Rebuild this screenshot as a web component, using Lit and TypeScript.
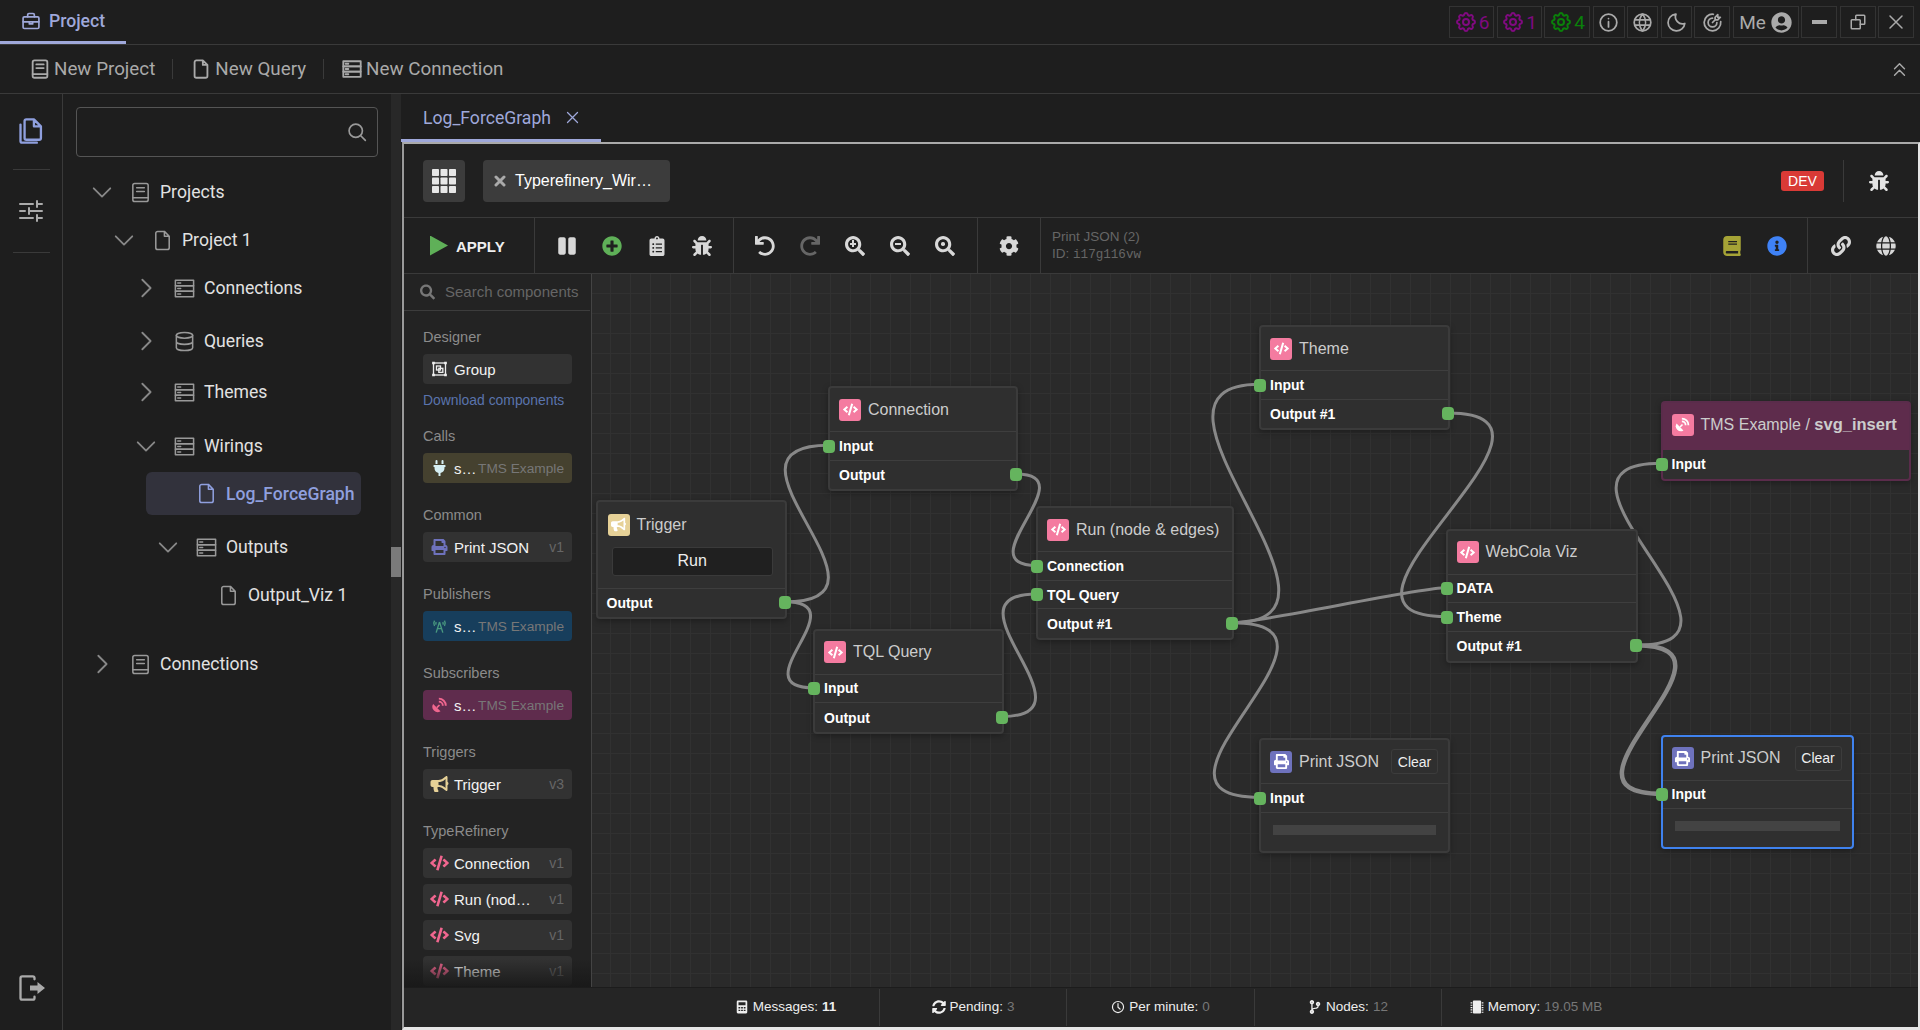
import { LitElement, html, css, svg } from "lit"
import { customElement } from "lit/decorators.js"

// font awesome style solid glyphs
const FA: Record<string, [string, string]> = {
  code: ["0 0 640 512", "M278.9 511.5l-61-17.7c-6.4-1.8-10-8.5-8.2-14.9L346.2 8.7c1.8-6.4 8.5-10.1 14.9-8.2l61 17.7c6.4 1.8 10 8.5 8.2 14.9L293.8 503.3c-1.9 6.4-8.5 10.1-14.9 8.2zm-114-112.2l43.5-46.4c4.6-4.9 4.3-12.7-.8-17.2L117 256l90.6-79.7c5.1-4.5 5.5-12.3.8-17.2l-43.5-46.4c-4.5-4.8-12.1-5.1-17-.5L3.8 247.2c-5.1 4.7-5.1 12.8 0 17.5l144.1 135.1c4.9 4.6 12.5 4.4 17-.5zm327.2.6l144.1-135.1c5.1-4.7 5.1-12.8 0-17.5L492.1 112.1c-4.8-4.5-12.4-4.3-17 .5L431.6 159c-4.6 4.9-4.3 12.7.8 17.2L523 256l-90.6 79.7c-5.1 4.5-5.5 12.3-.8 17.2l43.5 46.4c4.5 4.9 12.1 5.1 17 .6z"],
  print: ["0 0 512 512", "M448 192V77.25c0-8.49-3.37-16.62-9.37-22.63L393.37 9.37c-6-6-14.14-9.37-22.63-9.37H96C78.33 0 64 14.33 64 32v160c-35.35 0-64 28.65-64 64v112c0 8.84 7.16 16 16 16h48v96c0 17.67 14.33 32 32 32h320c17.67 0 32-14.33 32-32v-96h48c8.84 0 16-7.16 16-16V256c0-35.35-28.65-64-64-64zm-64 256H128v-96h256v96zm0-224H128V64h192v48c0 8.84 7.16 16 16 16h48v96zm48 72c-13.25 0-24-10.75-24-24 0-13.26 10.75-24 24-24s24 10.74 24 24c0 13.25-10.75 24-24 24z"],
  bug: ["0 0 512 512", "M511.988 288.9c-.478 17.43-15.217 31.1-32.653 31.1H424v16c0 21.864-4.882 42.584-13.6 61.145l60.228 60.228c12.496 12.497 12.496 32.758 0 45.255-12.498 12.497-32.759 12.496-45.256 0l-54.736-54.736C345.886 467.965 314.351 480 280 480V236c0-6.627-5.373-12-12-12h-24c-6.627 0-12 5.373-12 12v244c-34.351 0-65.886-12.035-90.636-32.108l-54.736 54.736c-12.498 12.497-32.759 12.496-45.256 0-12.496-12.497-12.496-32.758 0-45.255l60.228-60.228C92.882 378.584 88 357.864 88 336v-16H32.666C15.23 320 .491 306.33.013 288.9-.484 270.816 14.028 256 32 256h56v-58.745l-46.628-46.628c-12.496-12.497-12.496-32.758 0-45.255 12.498-12.497 32.758-12.497 45.256 0L141.255 160h229.489l54.627-54.627c12.498-12.497 32.758-12.497 45.256 0 12.496 12.497 12.496 32.758 0 45.255L424 197.255V256h56c17.972 0 32.484 14.816 31.988 32.9zM257 0c-61.856 0-112 50.144-112 112h224C369 50.144 318.856 0 257 0z"],
  bullhorn: ["0 0 576 512", "M576 240c0-23.63-12.95-44.04-32-55.12V32.01C544 23.26 537.02 0 512 0c-7.12 0-14.19 2.38-19.98 7.02l-85.03 68.03C364.28 109.19 310.66 128 256 128H64c-35.35 0-64 28.65-64 64v96c0 35.35 28.65 64 64 64h33.7c-1.39 10.48-2.18 21.14-2.18 32 0 39.77 9.26 77.35 25.56 110.94 5.19 10.69 16.52 17.06 28.4 17.06h74.28c26.05 0 41.69-29.84 25.9-50.56-16.4-21.52-26.15-48.36-26.15-77.44 0-11.11 1.62-21.79 4.41-32H256c54.66 0 108.28 18.81 150.98 52.95l85.03 68.03a32.023 32.023 0 0 0 19.98 7.02c24.92 0 32-22.78 32-32V295.13C563.05 284.04 576 263.63 576 240zm-96 141.42l-33.05-26.44C392.95 311.78 325.12 288 256 288v-96c69.12 0 136.95-23.78 190.95-66.98L480 98.58v282.84z"],
  plug: ["0 0 384 512", "M320,32a32,32,0,0,0-64,0v96h64Zm48,128H16A16,16,0,0,0,0,176v32a16,16,0,0,0,16,16H32v32A160.07,160.07,0,0,0,160,412.8V512h64V412.8A160.07,160.07,0,0,0,352,256V224h16a16,16,0,0,0,16-16V176A16,16,0,0,0,368,160ZM128,32a32,32,0,0,0-64,0v96h64Z"],
  info: ["0 0 512 512", "M256 8C119.043 8 8 119.083 8 256c0 136.997 111.043 248 248 248s248-111.003 248-248C504 119.083 392.957 8 256 8zm0 110c23.196 0 42 18.804 42 42s-18.804 42-42 42-42-18.804-42-42 18.804-42 42-42zm56 254c0 6.627-5.373 12-12 12h-88c-6.627 0-12-5.373-12-12v-24c0-6.627 5.373-12 12-12h12v-64h-12c-6.627 0-12-5.373-12-12v-24c0-6.627 5.373-12 12-12h64c6.627 0 12 5.373 12 12v100h12c6.627 0 12 5.373 12 12v24z"],
  plus: ["0 0 512 512", "M256 8C119 8 8 119 8 256s111 248 248 248 248-111 248-248S393 8 256 8zm144 276c0 6.6-5.4 12-12 12h-92v92c0 6.6-5.4 12-12 12h-56c-6.6 0-12-5.4-12-12v-92h-92c-6.6 0-12-5.4-12-12v-56c0-6.6 5.4-12 12-12h92v-92c0-6.6 5.4-12 12-12h56c6.6 0 12 5.4 12 12v92h92c6.6 0 12 5.4 12 12v56z"],
  pause: ["0 0 448 512", "M144 479H48c-26.5 0-48-21.5-48-48V79c0-26.5 21.5-48 48-48h96c26.5 0 48 21.5 48 48v352c0 26.5-21.5 48-48 48zm304-48V79c0-26.5-21.5-48-48-48h-96c-26.5 0-48 21.5-48 48v352c0 26.5 21.5 48 48 48h96c26.5 0 48-21.5 48-48z"],
  cog: ["0 0 512 512", "M487.4 315.7l-42.6-24.6c4.3-23.2 4.3-47 0-70.2l42.6-24.6c4.9-2.8 7.1-8.6 5.5-14-11.1-35.6-30-67.8-54.7-94.6-3.8-4.1-10-5.1-14.8-2.3L380.8 110c-17.9-15.4-38.5-27.3-60.8-35.1V25.8c0-5.6-3.9-10.5-9.4-11.7-36.7-8.2-74.3-7.8-109.2 0-5.5 1.2-9.4 6.1-9.4 11.7V75c-22.2 7.9-42.8 19.8-60.8 35.1L88.7 85.5c-4.9-2.8-11-1.9-14.8 2.3-24.7 26.7-43.6 58.9-54.7 94.6-1.7 5.4.6 11.2 5.5 14L67.3 221c-4.3 23.2-4.3 47 0 70.2l-42.6 24.6c-4.9 2.8-7.1 8.6-5.5 14 11.1 35.6 30 67.8 54.7 94.6 3.8 4.1 10 5.1 14.8 2.3l42.6-24.6c17.9 15.4 38.5 27.3 60.8 35.1v49.2c0 5.6 3.9 10.5 9.4 11.7 36.7 8.2 74.3 7.8 109.2 0 5.5-1.2 9.4-6.1 9.4-11.7v-49.2c22.2-7.9 42.8-19.8 60.8-35.1l42.6 24.6c4.9 2.8 11 1.9 14.8-2.3 24.7-26.7 43.6-58.9 54.7-94.6 1.5-5.5-.7-11.3-5.6-14.1zM256 336c-44.1 0-80-35.9-80-80s35.9-80 80-80 80 35.9 80 80-35.9 80-80 80z"],
  search: ["0 0 512 512", "M505 442.7L405.3 343c-4.5-4.5-10.6-7-17-7H372c27.6-35.3 44-79.7 44-128C416 93.1 322.9 0 208 0S0 93.1 0 208s93.1 208 208 208c48.3 0 92.7-16.4 128-44v16.3c0 6.4 2.5 12.5 7 17l99.7 99.7c9.4 9.4 24.6 9.4 33.9 0l28.3-28.3c9.4-9.4 9.4-24.6.1-34zM208 336c-70.7 0-128-57.2-128-128 0-70.7 57.2-128 128-128 70.7 0 128 57.2 128 128 0 70.7-57.2 128-128 128z"],
  undo: ["0 0 512 512", "M212.333 224.333H12c-6.627 0-12-5.373-12-12V12C0 5.373 5.373 0 12 0h48c6.627 0 12 5.373 12 12v78.112C117.773 39.279 184.26 7.47 258.175 8.007c136.906.994 246.448 111.623 246.157 248.532C504.041 393.258 393.12 504 256.333 504c-64.089 0-122.496-24.313-166.51-64.215-5.099-4.622-5.334-12.554-.467-17.42l33.967-33.967c4.474-4.474 11.662-4.717 16.401-.525C170.76 415.336 211.58 432 256.333 432c97.268 0 176-78.716 176-176 0-97.267-78.716-176-176-176-58.496 0-110.28 28.476-142.274 72.333h98.274c6.627 0 12 5.373 12 12v48c0 6.627-5.373 12-12 12z"],
  link: ["0 0 512 512", "M326.612 185.391c59.747 59.809 58.927 155.698.36 214.59-.11.12-.24.25-.36.37l-67.2 67.2c-59.27 59.27-155.699 59.262-214.96 0-59.27-59.26-59.27-155.7 0-214.96l37.106-37.106c9.84-9.84 26.786-3.3 27.294 10.606.648 17.722 3.826 35.527 9.69 52.721 1.986 5.822.567 12.262-3.783 16.612l-13.087 13.087c-28.026 28.026-28.905 73.66-1.155 101.96 28.024 28.579 74.086 28.749 102.325.51l67.2-67.19c28.191-28.191 28.073-73.757 0-101.83-3.701-3.694-7.429-6.564-10.341-8.569a16.037 16.037 0 0 1-6.947-12.606c-.396-10.567 3.348-21.456 11.698-29.806l21.054-21.055c5.521-5.521 14.182-6.199 20.584-1.731a152.482 152.482 0 0 1 20.522 17.197zM467.547 44.449c-59.261-59.262-155.69-59.27-214.96 0l-67.2 67.2c-.12.12-.25.25-.36.37-58.566 58.892-59.387 154.781.36 214.59a152.454 152.454 0 0 0 20.521 17.196c6.402 4.468 15.064 3.789 20.584-1.731l21.054-21.055c8.35-8.35 12.094-19.239 11.698-29.806a16.037 16.037 0 0 0-6.947-12.606c-2.912-2.005-6.64-4.875-10.341-8.569-28.073-28.073-28.191-73.639 0-101.83l67.2-67.19c28.239-28.239 74.3-28.069 102.325.51 27.75 28.3 26.872 73.934-1.155 101.96l-13.087 13.087c-4.35 4.35-5.769 10.79-3.783 16.612 5.864 17.194 9.042 34.999 9.69 52.721.509 13.906 17.454 20.446 27.294 10.606l37.106-37.106c59.271-59.259 59.271-155.699.001-214.959z"],
  globe: ["0 0 496 512", "M336.5 160C322 70.7 287.8 8 248 8s-74 62.7-88.5 152h177zM152 256c0 22.2 1.2 43.5 3.3 64h185.3c2.1-20.5 3.3-41.8 3.3-64s-1.2-43.5-3.3-64H155.3c-2.1 20.5-3.3 41.8-3.3 64zm324.7-96c-28.6-67.9-86.5-120.4-158-141.6 24.4 33.8 41.2 84.7 50 141.6h108zM177.2 18.4C105.8 39.6 47.8 92.1 19.3 160h108c8.7-56.9 25.5-107.8 49.9-141.6zM487.4 192H372.7c2.1 21 3.3 42.5 3.3 64s-1.2 43-3.3 64h114.6c5.5-20.5 8.6-41.8 8.6-64s-3.1-43.5-8.5-64zM120 256c0-21.5 1.2-43 3.3-64H8.6C3.2 212.5 0 233.8 0 256s3.2 43.5 8.6 64h114.6c-2-21-3.2-42.5-3.2-64zm39.5 96c14.5 89.3 48.7 152 88.5 152s74-62.7 88.5-152h-177zm159.3 141.6c71.4-21.2 129.4-73.7 158-141.6h-108c-8.8 56.9-25.6 107.8-50 141.6zM19.3 352c28.6 67.9 86.5 120.4 158 141.6-24.4-33.8-41.2-84.7-50-141.6h-108z"],
  book: ["0 0 448 512", "M448 360V24c0-13.3-10.7-24-24-24H96C43 0 0 43 0 96v320c0 53 43 96 96 96h328c13.3 0 24-10.7 24-24v-16c0-7.5-3.5-14.3-8.9-18.7-4.2-15.4-4.2-59.3 0-74.7 5.4-4.3 8.9-11.1 8.9-18.6zM128 134c0-3.3 2.7-6 6-6h212c3.3 0 6 2.7 6 6v20c0 3.3-2.7 6-6 6H134c-3.3 0-6-2.7-6-6v-20zm0 64c0-3.3 2.7-6 6-6h212c3.3 0 6 2.7 6 6v20c0 3.3-2.7 6-6 6H134c-3.3 0-6-2.7-6-6v-20zm253.4 250H96c-17.7 0-32-14.3-32-32 0-17.6 14.4-32 32-32h285.4c-1.9 17.1-1.9 46.9 0 64z"],
  clipboard: ["0 0 384 512", "M336 64h-80c0-35.3-28.7-64-64-64s-64 28.7-64 64H48C21.5 64 0 85.5 0 112v352c0 26.5 21.5 48 48 48h288c26.5 0 48-21.5 48-48V112c0-26.5-21.5-48-48-48zM96 424c-13.3 0-24-10.7-24-24s10.7-24 24-24 24 10.7 24 24-10.7 24-24 24zm0-96c-13.3 0-24-10.7-24-24s10.7-24 24-24 24 10.7 24 24-10.7 24-24 24zm0-96c-13.3 0-24-10.7-24-24s10.7-24 24-24 24 10.7 24 24-10.7 24-24 24zm96-192c13.3 0 24 10.7 24 24s-10.7 24-24 24-24-10.7-24-24 10.7-24 24-24zm128 368c0 4.4-3.6 8-8 8H168c-4.4 0-8-3.6-8-8v-16c0-4.4 3.6-8 8-8h144c4.4 0 8 3.6 8 8v16zm0-96c0 4.4-3.6 8-8 8H168c-4.4 0-8-3.6-8-8v-16c0-4.4 3.6-8 8-8h144c4.4 0 8 3.6 8 8v16zm0-96c0 4.4-3.6 8-8 8H168c-4.4 0-8-3.6-8-8v-16c0-4.4 3.6-8 8-8h144c4.4 0 8 3.6 8 8v16z"],
  user: ["0 0 496 512", "M248 8C111 8 0 119 0 256s111 248 248 248 248-111 248-248S385 8 248 8zm0 96c48.6 0 88 39.4 88 88s-39.4 88-88 88-88-39.4-88-88 39.4-88 88-88zm0 344c-58.7 0-111.3-26.6-146.5-68.2 18.8-35.4 55.6-59.8 98.5-59.8 2.4 0 4.8.4 7.1 1.1 13 4.2 26.6 6.9 40.9 6.9 14.3 0 28-2.7 40.9-6.9 2.3-.7 4.7-1.1 7.1-1.1 42.9 0 79.7 24.4 98.5 59.8C359.3 421.4 306.7 448 248 448z"],
  sync: ["0 0 512 512", "M370.72 133.28C339.458 104.008 298.888 87.962 255.848 88c-77.458.068-144.328 53.178-162.791 126.85-1.344 5.363-6.122 9.15-11.651 9.15H24.103c-7.498 0-13.194-6.807-11.807-14.176C33.933 94.924 134.813 8 256 8c66.448 0 126.791 26.136 171.315 68.685L463.03 40.97C478.149 25.851 504 36.559 504 57.941V192c0 13.255-10.745 24-24 24H345.941c-21.382 0-32.09-25.851-16.971-40.971l41.75-41.749zM32 296h134.059c21.382 0 32.09 25.851 16.971 40.971l-41.75 41.75c31.262 29.273 71.835 45.319 114.876 45.28 77.418-.07 144.315-53.144 162.787-126.849 1.344-5.363 6.122-9.15 11.651-9.15h57.304c7.498 0 13.194 6.807 11.807 14.176C478.067 417.076 377.187 504 256 504c-66.448 0-126.791-26.136-171.315-68.685L48.97 471.03C33.851 486.149 8 475.441 8 454.059V320c0-13.255 10.745-24 24-24z"],
  branch: ["0 0 384 512", "M384 144c0-44.2-35.8-80-80-80s-80 35.8-80 80c0 36.4 24.3 67.1 57.5 76.8-.6 16.1-4.2 28.5-11 36.9-15.4 19.2-49.3 22.4-85.2 25.7-28.2 2.6-57.4 5.4-81.3 16.9v-144c32.5-10.2 56-40.5 56-76.3 0-44.2-35.8-80-80-80S0 35.8 0 80c0 35.8 23.5 66.1 56 76.3v199.3C23.5 365.9 0 396.2 0 432c0 44.2 35.8 80 80 80s80-35.8 80-80c0-34-21.2-63.1-51.2-74.6 3.1-5.2 7.8-9.8 14.9-13.4 16.2-8.2 40.4-10.4 66.1-12.8 42.2-3.9 90-8.4 118.2-43.4 14-17.4 21.1-39.8 21.6-67.9 31.6-10.8 54.4-40.7 54.4-75.9zM80 64c8.8 0 16 7.2 16 16s-7.2 16-16 16-16-7.2-16-16 7.2-16 16-16zm0 384c-8.8 0-16-7.2-16-16s7.2-16 16-16 16 7.2 16 16-7.2 16-16 16zm224-320c8.8 0 16 7.2 16 16s-7.2 16-16 16-16-7.2-16-16 7.2-16 16-16z"],
}

const fa = (name: string, cls = "") => {
  const [vb, d] = FA[name]
  return html`<svg class="ic ${cls}" viewBox=${vb} fill="currentColor"><path d=${d}></path></svg>`
}

// outlined icons on a 24 grid
const LINE: Record<string, any> = {
  gear: svg`<path d="M10.325 4.317c.426 -1.756 2.924 -1.756 3.35 0a1.724 1.724 0 0 0 2.573 1.066c1.543 -.94 3.31 .826 2.37 2.37a1.724 1.724 0 0 0 1.065 2.572c1.756 .426 1.756 2.924 0 3.35a1.724 1.724 0 0 0 -1.066 2.573c.94 1.543 -.826 3.31 -2.37 2.37a1.724 1.724 0 0 0 -2.572 1.065c-.426 1.756 -2.924 1.756 -3.35 0a1.724 1.724 0 0 0 -2.573 -1.066c-1.543 .94 -3.31 -.826 -2.37 -2.37a1.724 1.724 0 0 0 -1.065 -2.572c-1.756 -.426 -1.756 -2.924 0 -3.35a1.724 1.724 0 0 0 1.066 -2.573c-.94 -1.543 .826 -3.31 2.37 -2.37c1 .608 2.296 .07 2.572 -1.065z"/><circle cx="12" cy="12" r="3"/>`,
  infoLine: svg`<circle cx="12" cy="12" r="9.5"/><path d="M12 7.5v.01M12 11v6"/>`,
  world: svg`<circle cx="12" cy="12" r="9.5"/><path d="M3.2 9h17.6M3.2 15h17.6M11.5 2.5a17 17 0 0 0 0 19M12.5 2.5a17 17 0 0 1 0 19"/>`,
  moon: svg`<path d="M11 2.5c.2 0 .4 0 .4 0a8 8 0 0 0 10.1 10.6a9.6 9.6 0 1 1 -10.5 -10.6z"/>`,
  target: svg`<path d="M12 7a5 5 0 1 0 5 5M13 2.6a9.5 9.5 0 1 0 8.4 8.4M15 6v3h3l3 -3h-3v-3zM15 9l-3 3"/>`,
  restore: svg`<rect x="3" y="9" width="12" height="12" rx="1"/><path d="M9 9V4a1 1 0 0 1 1 -1h10a1 1 0 0 1 1 1v10a1 1 0 0 1 -1 1h-5"/>`,
  close: svg`<path d="M4 4l16 16M20 4L4 20"/>`,
  chevUp2: svg`<path d="M5 11l7 -7 7 7M5 20l7 -7 7 7"/>`,
  briefcase: svg`<rect x="2.5" y="7" width="19" height="14" rx="1.5"/><path d="M8 7V4.5A1.5 1.5 0 0 1 9.5 3h5A1.5 1.5 0 0 1 16 4.5V7M2.5 13h19M10 13v2.5h4V13"/>`,
  doc: svg`<rect x="4" y="2.5" width="16" height="19" rx="2"/><path d="M8 7h8M8 11h8M4 17.5h16"/>`,
  file: svg`<path d="M14 2.5H7a2 2 0 0 0 -2 2v15a2 2 0 0 0 2 2h10a2 2 0 0 0 2 -2V7.5zM14 2.5v5h5"/>`,
  server: svg`<rect x="2.5" y="3.5" width="19" height="5.6"/><rect x="2.5" y="9.2" width="19" height="5.6"/><rect x="2.5" y="14.9" width="19" height="5.6"/><path d="M5 6.3h3M5 12h3M5 17.7h3"/>`,
  db: svg`<ellipse cx="12" cy="5.5" rx="8.5" ry="3"/><path d="M3.5 5.5v13c0 1.7 3.8 3 8.5 3s8.5 -1.3 8.5 -3v-13M3.5 12c0 1.7 3.8 3 8.5 3s8.5 -1.3 8.5 -3"/>`,
  chevRight: svg`<path d="M8 3l9 9 -9 9"/>`,
  chevDown: svg`<path d="M3 8l9 9 9 -9"/>`,
  search: svg`<circle cx="10.5" cy="10.5" r="8"/><path d="M16.5 16.5l5.5 5.5"/>`,
  copy: svg`<path d="M14.5 2H8a1.5 1.5 0 0 0 -1.5 1.5v14.5a1.5 1.5 0 0 0 1.5 1.5h11a1.5 1.5 0 0 0 1.5 -1.5V8zM14.5 2v6h6M3 6.5v14A1.5 1.5 0 0 0 4.5 22H17"/>`,
  sliders: svg`<path d="M1 5h13M18 5h5M18 2v6M1 12h5M10 12h13M10 9v6M1 19h13M18 19h5M18 16v6" />`,
  exit: svg`<path d="M15 4.5V3.5a1.5 1.5 0 0 0 -1.5 -1.5H4.5A1.5 1.5 0 0 0 3 3.5v17a1.5 1.5 0 0 0 1.5 1.5h9a1.5 1.5 0 0 0 1.5 -1.5v-1"/>`,
  clock: svg`<circle cx="12" cy="12" r="9.5"/><path d="M12 6v6.5l3.5 3"/>`,
}

const line = (name: string, cls = "") =>
  html`<svg class="ic ${cls}" viewBox="0 0 24 24" fill="none" stroke="currentColor" stroke-width="2" stroke-linecap="round" stroke-linejoin="round">${LINE[name]}</svg>`

const dish = (cls = "") => html`<svg class="ic ${cls}" viewBox="0 0 24 24" fill="currentColor">
  <path d="M2.5 10.5l11 11a8 8 0 0 1 -11 -11z"></path>
  <path d="M8 16l4 -4" stroke="currentColor" stroke-width="2.5"></path>
  <path d="M11 7a6 6 0 0 1 6 6M11 2.5a10.5 10.5 0 0 1 10.5 10.5" fill="none" stroke="currentColor" stroke-width="2.8"></path>
</svg>`

const tower = (cls = "") => html`<svg class="ic ${cls}" viewBox="0 0 24 24" fill="none" stroke="currentColor" stroke-width="2">
  <path d="M4.5 4a8 8 0 0 0 0 8M7 6a4.5 4.5 0 0 0 0 4M19.5 4a8 8 0 0 1 0 8M17 6a4.5 4.5 0 0 1 0 4"></path>
  <path d="M12 6l-5 16M12 6l5 16M9 16h6"></path>
</svg>`

const group = (cls = "") => html`<svg class="ic ${cls}" viewBox="0 0 24 24" fill="none" stroke="currentColor" stroke-width="2">
  <rect x="3" y="3" width="18" height="18"></rect>
  <rect x="7.5" y="7.5" width="6" height="6"></rect>
  <rect x="11" y="11" width="6" height="6"></rect>
  <path d="M1 1h4v4H1zM19 1h4v4h-4zM1 19h4v4H1zM19 19h4v4h-4z" fill="currentColor" stroke="none"></path>
</svg>`

const gridIcon = html`<svg class="ic" viewBox="0 0 24 24" fill="currentColor">
  ${[0, 8.5, 17].map(y => [0, 8.5, 17].map(x => svg`<rect x=${x} y=${y} width="7" height="7" rx="0.8"/>`))}
</svg>`

const calc = html`<svg class="ic" viewBox="0 0 24 24" fill="currentColor">
  <path fill-rule="evenodd" d="M5 1h14a2 2 0 0 1 2 2v18a2 2 0 0 1 -2 2H5a2 2 0 0 1 -2 -2V3a2 2 0 0 1 2 -2zM6 4v5h12V4zM6 12v2.5h3V12zM10.5 12v2.5h3V12zM15 12v2.5h3V12zM6 16.5V19h3v-2.5zM10.5 16.5V19h3v-2.5zM15 16.5V19h3v-2.5z"></path>
</svg>`

const chip = html`<svg class="ic" viewBox="0 0 24 24" fill="currentColor">
  <rect x="5" y="1" width="14" height="22" rx="1.5"></rect>
  <path d="M1 4h3v2H1zM1 8h3v2H1zM1 12h3v2H1zM1 16h3v2H1zM1 20h3v2H1zM20 4h3v2h-3zM20 8h3v2h-3zM20 12h3v2h-3zM20 16h3v2h-3zM20 20h3v2h-3z"></path>
</svg>`

type Row = { label: string; side: "in" | "out" }
type Node = {
  id: string; x: number; y: number; w: number; title: string; glyph: string
  rows: Row[]; head?: number; cls?: string; clear?: boolean; out?: boolean; run?: boolean
}

const ROW_H = 28.7
const ORIGIN = { x: 592, y: 274 }

const NODES: Node[] = [
  { id: "trigger", x: 595.5, y: 499.5, w: 191.5, title: "Trigger", glyph: "bullhorn", head: 87, cls: "yellow", run: true, rows: [{ label: "Output", side: "out" }] },
  { id: "conn", x: 828, y: 386, w: 190, title: "Connection", glyph: "code", rows: [{ label: "Input", side: "in" }, { label: "Output", side: "out" }] },
  { id: "tql", x: 813, y: 628.5, w: 191, title: "TQL Query", glyph: "code", rows: [{ label: "Input", side: "in" }, { label: "Output", side: "out" }] },
  { id: "run", x: 1036, y: 506, w: 198, title: "Run (node & edges)", glyph: "code", rows: [{ label: "Connection", side: "in" }, { label: "TQL Query", side: "in" }, { label: "Output #1", side: "out" }] },
  { id: "theme", x: 1259, y: 325, w: 191, title: "Theme", glyph: "code", rows: [{ label: "Input", side: "in" }, { label: "Output #1", side: "out" }] },
  { id: "cola", x: 1445.5, y: 528.5, w: 192.5, title: "WebCola Viz", glyph: "code", rows: [{ label: "DATA", side: "in" }, { label: "Theme", side: "in" }, { label: "Output #1", side: "out" }] },
  { id: "tms", x: 1660.5, y: 401, w: 250.5, title: "TMS Example / ", glyph: "dish", head: 47, cls: "sub", rows: [{ label: "Input", side: "in" }] },
  { id: "print1", x: 1259, y: 738, w: 191, title: "Print JSON", glyph: "print", cls: "violet", clear: true, out: true, rows: [{ label: "Input", side: "in" }] },
  { id: "print2", x: 1660.5, y: 734.5, w: 193, title: "Print JSON", glyph: "print", cls: "violet selected", clear: true, out: true, rows: [{ label: "Input", side: "in" }] },
]

// from node, row, to node, row, control offset, width
const WIRES: [string, number, string, number, number, number][] = [
  ["trigger", 0, "conn", 0, 130, 3],
  ["trigger", 0, "tql", 0, 75, 3],
  ["conn", 1, "run", 0, 72, 3],
  ["tql", 1, "run", 1, 100, 3],
  ["run", 2, "theme", 0, 150, 3],
  ["run", 2, "cola", 0, 30, 3],
  ["run", 2, "print1", 0, 145, 3],
  ["theme", 1, "cola", 1, 155, 3],
  ["cola", 2, "tms", 0, 145, 3],
  ["cola", 2, "print2", 0, 125, 4.5],
]

const portAt = (id: string, row: number) => {
  const n = NODES.find(v => v.id === id)!
  const y = n.y + 2 + (n.head ?? 44) + ROW_H * (row + 0.5) - ORIGIN.y - 1
  const x = n.rows[row].side === "in" ? n.x + 0.6 : n.x + n.w - 2
  return { x: x - ORIGIN.x, y }
}

@customElement("flow-canvas")
class FlowCanvas extends LitElement {
  static styles = css`
    :host {
      display: block;
      position: relative;
      flex: 1;
      overflow: hidden;
      background-color: #2a2a2a;
      background-image:
        linear-gradient(to right, #313131 1px, transparent 1px),
        linear-gradient(to bottom, #313131 1px, transparent 1px);
      background-size: 20px 20px;
      background-position: 18px 19px;
      font-family: "Liberation Sans", Arial, sans-serif;
    }
    .wires {
      position: absolute;
      inset: 0;
      width: 100%;
      height: 100%;
    }
    .wires path {
      fill: none;
      stroke: #888;
    }
    .node {
      position: absolute;
      box-sizing: border-box;
      background: #2f2f2f;
      border: 2px solid #3b3b3b;
      border-radius: 4px;
      box-shadow: 0 2px 6px rgba(0, 0, 0, 0.3);
    }
    .head {
      box-sizing: border-box;
      height: 44px;
      padding: 0 10px 0 9px;
      border-bottom: 1px solid #3e3e3e;
      display: flex;
      align-items: center;
      gap: 7px;
      color: #ccc;
      font-size: 16px;
      white-space: nowrap;
    }
    .badge {
      flex: none;
      width: 22px;
      height: 22px;
      border-radius: 3px;
      background: #f47ba0;
      color: #fff;
      display: flex;
      align-items: center;
      justify-content: center;
    }
    .badge .ic {
      width: 15px;
      height: 15px;
    }
    .yellow .badge {
      background: #e6d197;
    }
    .violet .badge {
      background: #6e72bd;
    }
    .sub {
      border-color: #5a2c4b;
    }
    .sub .head {
      background: #5e2c4c;
      height: 47px;
      padding-bottom: 4px;
      border-bottom: none;
    }
    .sub b {
      font-size: 16.5px;
    }
    .selected {
      border-color: #3f82ee;
    }
    .title {
      flex: 1;
    }
    .clear {
      box-sizing: border-box;
      width: 47px;
      height: 25px;
      border: 1px solid #3c3c3c;
      border-radius: 3px;
      color: #eee;
      font-size: 14px;
      display: flex;
      align-items: center;
      justify-content: center;
    }
    .trigger-head {
      height: 87px;
      display: block;
      padding: 12px 9px 0 10px;
    }
    .trigger-title {
      display: flex;
      align-items: center;
      gap: 7px;
    }
    .run {
      box-sizing: border-box;
      margin: 11px 3px 0 4px;
      height: 29px;
      background: #202020;
      border: 1px solid #3a3a3a;
      border-radius: 3px;
      color: #eee;
      font-size: 16px;
      display: flex;
      align-items: center;
      justify-content: center;
    }
    .row {
      position: relative;
      box-sizing: border-box;
      height: 28.7px;
      padding-left: 9px;
      display: flex;
      align-items: center;
      color: #fff;
      font-size: 14px;
      font-weight: 700;
      border-bottom: 1px solid #3e3e3e;
    }
    .row:last-child {
      border-bottom: none;
    }
    .port {
      position: absolute;
      top: 7.5px;
      width: 12px;
      height: 13px;
      border-radius: 4px;
      background: #65b45e;
    }
    .port.in {
      left: -7px;
    }
    .port.out {
      right: -6px;
    }
    .output {
      height: 38px;
      padding: 12px 12px 0;
      box-sizing: border-box;
    }
    .output div {
      height: 10px;
      background: #434343;
    }
  `

  renderBadge(n: Node) {
    return html`<span class="badge">${n.glyph === "dish" ? dish() : fa(n.glyph)}</span>`
  }

  renderNode(n: Node) {
    return html`
      <div class="node ${n.cls ?? ""}" style="left:${n.x - ORIGIN.x}px;top:${n.y - ORIGIN.y}px;width:${n.w}px">
        ${n.run
          ? html`<div class="head trigger-head">
              <div class="trigger-title">${this.renderBadge(n)}<span>${n.title}</span></div>
              <div class="run">Run</div>
            </div>`
          : html`<div class="head">
              ${this.renderBadge(n)}
              <span class="title">${n.title}${n.id === "tms" ? html`<b>svg_insert</b>` : ""}</span>
              ${n.clear ? html`<span class="clear">Clear</span>` : ""}
            </div>`}
        ${n.rows.map(r => html`<div class="row">${r.label}<span class="port ${r.side}"></span></div>`)}
        ${n.out ? html`<div class="output"><div></div></div>` : ""}
      </div>
    `
  }

  render() {
    return html`
      <svg class="wires">
        ${WIRES.map(([a, i, b, j, c, w]) => {
          const p = portAt(a, i)
          const q = portAt(b, j)
          return svg`<path stroke-width=${w} d="M${p.x} ${p.y} C${p.x + c} ${p.y} ${q.x - c} ${q.y} ${q.x} ${q.y}"/>`
        })}
      </svg>
      ${NODES.map(n => this.renderNode(n))}
    `
  }
}

const TREE = [
  { label: "Projects", depth: 0, chev: "chevDown", icon: "doc", mt: 0 },
  { label: "Project 1", depth: 1, chev: "chevDown", icon: "file", mt: 0 },
  { label: "Connections", depth: 2, chev: "chevRight", icon: "server", mt: 0 },
  { label: "Queries", depth: 2, chev: "chevRight", icon: "db", mt: 5 },
  { label: "Themes", depth: 2, chev: "chevRight", icon: "server", mt: 3 },
  { label: "Wirings", depth: 2, chev: "chevDown", icon: "server", mt: 6 },
  { label: "Log_ForceGraph", depth: 3, chev: "", icon: "file", mt: 2, active: true },
  { label: "Outputs", depth: 3, chev: "chevDown", icon: "server", mt: 8 },
  { label: "Output_Viz 1", depth: 4, chev: "", icon: "file", mt: 0 },
  { label: "Connections", depth: 0, chev: "chevRight", icon: "doc", mt: 21 },
]

const TOP_BUTTONS = [
  { w: 45, cls: "purple gearbtn", body: () => html`${line("gear")}<span>6</span>` },
  { w: 45, cls: "purple gearbtn", body: () => html`${line("gear")}<span>1</span>` },
  { w: 46, cls: "green gearbtn", body: () => html`${line("gear")}<span>4</span>` },
  { w: 32, cls: "", body: () => line("infoLine") },
  { w: 31, cls: "", body: () => line("world") },
  { w: 31, cls: "", body: () => line("moon") },
  { w: 36, cls: "", body: () => line("target") },
  { w: 66, cls: "", body: () => html`<span>Me</span>${fa("user")}` },
  { w: 36, cls: "", body: () => html`<span class="dash"></span>` },
  { w: 36, cls: "small", body: () => line("restore") },
  { w: 36, cls: "small", body: () => line("close") },
]

type Item = { label: string; icon: any; cls?: string; ver?: string; tms?: boolean; tint?: string }
const PALETTE: { title: string; items: Item[]; link?: boolean }[] = [
  { title: "Designer", link: true, items: [{ label: "Group", icon: group(), cls: "white" }] },
  { title: "Calls", items: [{ label: "s…", icon: fa("plug"), cls: "ice", tms: true, tint: "olive" }] },
  { title: "Common", items: [{ label: "Print JSON", icon: fa("print"), cls: "violet", ver: "v1" }] },
  { title: "Publishers", items: [{ label: "s…", icon: tower(), cls: "teal", tms: true, tint: "blue" }] },
  { title: "Subscribers", items: [{ label: "s…", icon: dish(), cls: "pink", tms: true, tint: "plum" }] },
  { title: "Triggers", items: [{ label: "Trigger", icon: fa("bullhorn"), cls: "sand", ver: "v3" }] },
  {
    title: "TypeRefinery",
    items: ["Connection", "Run (nod…", "Svg", "Theme"].map(label => ({ label, icon: fa("code"), cls: "pink", ver: "v1" })),
  },
]

const STATUS = [
  { icon: calc, key: "Messages:", value: "11", strong: true },
  { icon: fa("sync"), key: "Pending:", value: "3" },
  { icon: line("clock"), key: "Per minute:", value: "0" },
  { icon: fa("branch"), key: "Nodes:", value: "12" },
  { icon: chip, key: "Memory:", value: "19.05 MB" },
]

@customElement("app-root")
class AppRoot extends LitElement {
  static styles = css`
    :host {
      display: flex;
      flex-direction: column;
      width: 100vw;
      height: 100vh;
      overflow: hidden;
      background: #1e1e1e;
      color: #ddd;
      font-family: Roboto, sans-serif;
    }
    .ic {
      display: block;
      width: 100%;
      height: 100%;
    }

    .topbar {
      box-sizing: border-box;
      flex: none;
      height: 45px;
      border-bottom: 1px solid #3a3a3a;
      display: flex;
      justify-content: space-between;
    }
    .app-tab {
      box-sizing: border-box;
      width: 126px;
      height: 44px;
      padding-left: 21px;
      display: flex;
      align-items: center;
      gap: 8px;
      color: #9fa8da;
      font-size: 17.6px;
      font-weight: 500;
      border-bottom: 3px solid #9fa8da;
    }
    .app-tab svg {
      width: 20px;
      height: 20px;
    }
    .top-buttons {
      display: flex;
      gap: 2.5px;
      padding: 6px 6px 0 0;
    }
    .top-btn {
      box-sizing: border-box;
      height: 32px;
      border: 1px solid #333;
      display: flex;
      align-items: center;
      justify-content: center;
      gap: 5px;
      color: #aaa;
      font-size: 19px;
    }
    .top-btn svg {
      width: 21px;
      height: 21px;
      flex: none;
    }
    .top-btn.gearbtn {
      gap: 1px;
    }
    .top-btn.gearbtn svg {
      width: 24px;
      height: 24px;
    }
    .top-btn.small svg {
      width: 18px;
      height: 18px;
    }
    .top-btn.purple {
      color: #800a80;
    }
    .top-btn.green {
      color: #0a800a;
    }
    .dash {
      width: 15px;
      height: 4px;
      background: #aaa;
    }

    .actionbar {
      box-sizing: border-box;
      flex: none;
      height: 49px;
      border-bottom: 1px solid #3a3a3a;
      display: flex;
      align-items: center;
      color: #aaa;
      font-size: 18.8px;
      padding-left: 29px;
    }
    .action {
      display: flex;
      align-items: center;
      gap: 3px;
    }
    .action svg {
      width: 22px;
      height: 22px;
    }
    .sep {
      width: 1px;
      height: 20px;
      background: #3a3a3a;
      margin: 0 17px;
    }
    .collapse {
      margin-left: auto;
      margin-right: 12px;
      width: 17px;
      height: 17px;
      color: #aaa;
    }

    .body {
      flex: 1;
      min-height: 0;
      display: flex;
    }
    .rail {
      box-sizing: border-box;
      flex: none;
      width: 63px;
      border-right: 1px solid #3a3a3a;
      padding-top: 23px;
      display: flex;
      flex-direction: column;
      align-items: center;
      color: #aaa;
    }
    .rail .copy {
      width: 28px;
      height: 28px;
      color: #8f9fde;
    }
    .rail hr {
      width: 37px;
      border: none;
      border-top: 1px solid #3a3a3a;
      margin: 24px 0 0;
    }
    .rail .sliders {
      width: 24px;
      height: 24px;
      margin-top: 29px;
      margin-bottom: 5px;
    }
    .rail .exit {
      position: relative;
      margin-top: auto;
      margin-bottom: 28px;
      width: 28px;
      height: 28px;
    }
    .rail .exit svg {
      width: 28px;
      height: 28px;
    }
    .rail .arrow {
      position: absolute;
      right: 0;
      top: 8px;
      width: 15px;
      height: 12px;
      background: #aaa;
      clip-path: polygon(0 30%, 50% 30%, 50% 0, 100% 50%, 50% 100%, 50% 70%, 0 70%);
    }

    .tree {
      flex: none;
      width: 328px;
      box-sizing: border-box;
      padding-top: 13px;
      display: flex;
      flex-direction: column;
    }
    .tree-search {
      box-sizing: border-box;
      flex: none;
      margin-left: 13px;
      width: 302px;
      height: 50px;
      border: 1px solid #555;
      border-radius: 4px;
      margin-bottom: 11px;
      display: flex;
      align-items: center;
      justify-content: flex-end;
      padding-right: 10px;
      color: #999;
    }
    .tree-search svg {
      width: 20px;
      height: 20px;
    }
    .tree-row {
      flex: none;
      box-sizing: border-box;
      height: 48px;
      display: flex;
      align-items: center;
      font-size: 17.6px;
      color: #e2e2e2;
      white-space: nowrap;
    }
    .tree-row.active {
      height: 43px;
      margin-left: 83px;
      width: 215px;
      background: #32323c;
      border-radius: 6px;
      color: #8f9fde;
      font-weight: 500;
    }
    .tree-row.active .tree-icon {
      color: #8f9fde;
    }
    .tree-chev {
      flex: none;
      width: 22px;
      height: 22px;
      margin: 0 16px 0 -1px;
      color: #888;
    }
    .tree-icon {
      flex: none;
      width: 23px;
      height: 23px;
      margin: 0 8.5px 0 -0.5px;
      color: #999;
    }
    .tree-icon svg {
      stroke-width: 1.6;
    }

    .scroller {
      position: relative;
      flex: none;
      width: 10px;
      background: #282828;
    }
    .scroller div {
      position: absolute;
      top: 453px;
      left: 0;
      right: 0;
      height: 30px;
      background: #7a7a7a;
    }

    .main {
      flex: 1;
      min-width: 0;
      display: flex;
      flex-direction: column;
    }
    .doc-tabs {
      flex: none;
      height: 48px;
      box-sizing: border-box;
    }
    .doc-tab {
      box-sizing: border-box;
      width: 200px;
      height: 48px;
      padding: 2px 0 0 22px;
      display: flex;
      align-items: center;
      color: #9fa8da;
      font-size: 17.6px;
      border-bottom: 3px solid #9fa8da;
    }
    .doc-tab svg {
      width: 15px;
      height: 15px;
      margin-left: 14px;
    }
    .panel {
      flex: 1;
      min-height: 0;
      box-sizing: border-box;
      margin-left: 1px;
      border-top: 2px solid #aaa;
      border-left: 2px solid #999;
      border-right: 2px solid #e6e6e6;
      border-bottom: 3px solid #e6e6e6;
      background: #202020;
      display: flex;
      flex-direction: column;
      font-family: "Liberation Sans", Arial, sans-serif;
    }
    .panel-head {
      box-sizing: border-box;
      flex: none;
      height: 74px;
      border-bottom: 1px solid #3a3a3a;
      display: flex;
      align-items: center;
      padding-left: 19px;
    }
    .grid-btn {
      box-sizing: border-box;
      width: 42px;
      height: 42px;
      padding: 9px;
      background: #3c3c3c;
      border-radius: 4px;
      color: #e8e8e8;
    }
    .chip {
      box-sizing: border-box;
      width: 187px;
      height: 42px;
      margin-left: 18px;
      padding-left: 11px;
      background: #3c3c3c;
      border-radius: 4px;
      display: flex;
      align-items: center;
      gap: 9px;
      color: #fff;
      font-size: 16px;
      white-space: nowrap;
    }
    .chip svg {
      flex: none;
      width: 12px;
      height: 12px;
      color: #aaa;
      stroke-width: 6;
    }
    .dev {
      box-sizing: border-box;
      margin-left: auto;
      width: 43px;
      height: 20px;
      background: #d93a36;
      border-radius: 3px;
      color: #fff;
      font-size: 14px;
      display: flex;
      align-items: center;
      justify-content: center;
    }
    .bug-cell {
      box-sizing: border-box;
      width: 75px;
      height: 42px;
      margin-left: 19px;
      padding-right: 5px;
      border-left: 1px solid #3a3a3a;
      display: flex;
      align-items: center;
      justify-content: center;
      color: #e4e4e4;
    }
    .bug-cell svg {
      width: 20px;
      height: 20px;
    }

    .toolbar {
      box-sizing: border-box;
      flex: none;
      height: 56px;
      border-bottom: 1px solid #3a3a3a;
      display: flex;
      align-items: stretch;
    }
    .tool-group {
      box-sizing: border-box;
      display: flex;
      align-items: center;
      border-right: 1px solid #3a3a3a;
      color: #d8d8d8;
    }
    .apply {
      width: 131px;
      padding: 2px 0 0 26px;
      gap: 8px;
      font-size: 15px;
      font-weight: 700;
      color: #eee;
    }
    .apply i {
      width: 18px;
      height: 20px;
      margin-top: -2px;
      background: #5fb058;
      clip-path: polygon(0 0, 100% 50%, 0 100%);
    }
    .tool {
      flex: none;
      box-sizing: border-box;
      width: 45px;
      display: flex;
      justify-content: center;
    }
    .tool svg {
      width: 20px;
      height: 20px;
    }
    .tool .flip {
      transform: scaleX(-1);
      color: #666;
    }
    .tool .green {
      color: #5fb058;
    }
    .tool .olive {
      color: #a5a336;
    }
    .tool .blue {
      color: #3f82f6;
    }
    .lens {
      position: relative;
      width: 20px;
      height: 20px;
    }
    .lens b {
      position: absolute;
      left: 5px;
      top: 7px;
      width: 6.5px;
      height: 2px;
      background: currentColor;
    }
    .lens .v {
      left: 7.25px;
      top: 4.75px;
      width: 2px;
      height: 6.5px;
    }
    .lens .dot {
      left: 6.5px;
      top: 6.5px;
      width: 3.5px;
      height: 3.5px;
      border-radius: 50%;
    }
    .meta {
      flex: 1;
      padding-left: 11px;
      color: #666;
      font-size: 13.5px;
      justify-content: space-between;
      border-right: 1px solid #3a3a3a;
    }
    .meta-text {
      line-height: 17px;
    }
    .meta-text code {
      font-family: "Liberation Mono", monospace;
      font-size: 12.6px;
    }
    .meta-tools {
      display: flex;
      padding-right: 8px;
    }

    .work {
      flex: 1;
      min-height: 0;
      display: flex;
    }
    .palette {
      position: relative;
      box-sizing: border-box;
      flex: none;
      width: 188px;
      background: #232323;
      border-right: 1px solid #444;
      overflow: hidden;
      font-size: 14.5px;
    }
    .palette-search {
      box-sizing: border-box;
      height: 37px;
      margin-right: 1px;
      padding: 0 0 1px 16px;
      border-bottom: 1px solid #3c3c3c;
      display: flex;
      align-items: center;
      gap: 10px;
      color: #666;
      font-size: 15px;
    }
    .palette-search svg {
      width: 15px;
      height: 16px;
      color: #777;
    }
    .section {
      padding: 16px 19px 0;
    }
    .section-title {
      height: 20px;
      line-height: 20px;
      margin-bottom: 7px;
      color: #8b8b8b;
    }
    .item {
      box-sizing: border-box;
      height: 30px;
      margin-bottom: 6px;
      padding: 0 8px 0 7px;
      background: #323232;
      border-radius: 4px;
      display: flex;
      align-items: center;
      color: #f2f2f2;
      font-size: 15px;
    }
    .item.olive {
      background: #45412f;
    }
    .item.blue {
      background: #173e5c;
    }
    .item.plum {
      background: #5f2c4d;
    }
    .item-icon {
      flex: none;
      width: 19px;
      height: 16px;
      margin-right: 5px;
    }
    .item-icon.white {
      color: #eee;
    }
    .item-icon.ice {
      color: #d5eef2;
    }
    .item-icon.violet {
      color: #6e72bd;
    }
    .item-icon.teal {
      color: #4a9a80;
    }
    .item-icon.pink {
      color: #f0668f;
    }
    .item-icon.sand {
      color: #e6d197;
    }
    .item-label {
      flex: none;
      white-space: nowrap;
    }
    .item-ver {
      margin-left: auto;
      color: #666;
      font-size: 14px;
    }
    .item-tms {
      margin-left: auto;
      color: #777;
      font-size: 13.7px;
      white-space: nowrap;
    }
    .dl {
      display: block;
      color: #5a74ad;
      font-size: 13.9px;
      line-height: 20px;
    }
    .fade {
      position: absolute;
      left: 0;
      right: 0;
      bottom: 0;
      height: 28px;
      background: linear-gradient(to bottom, rgba(24, 24, 24, 0), rgba(24, 24, 24, 0.9));
    }

    .status {
      box-sizing: border-box;
      flex: none;
      height: 40px;
      background: #252525;
      border-top: 1px solid #1c1c1c;
      display: flex;
      justify-content: center;
      align-items: stretch;
      font-size: 13.5px;
      color: #eee;
    }
    .stat {
      box-sizing: border-box;
      width: 187.5px;
      padding-bottom: 2px;
      display: flex;
      align-items: center;
      justify-content: center;
      gap: 4px;
      border-right: 1px solid #3a3a3a;
      margin: 1px 0 1px;
    }
    .stat:last-child {
      border-right: none;
    }
    .stat svg {
      width: 14px;
      height: 14px;
      flex: none;
    }
    .stat em {
      font-style: normal;
      color: #777;
    }
    .stat strong {
      color: #eee;
    }
  `

  renderTreeRow(r: typeof TREE[number]) {
    const pad = 29 + 22 * r.depth - (r.active ? 83 : 0)
    return html`
      <div class="tree-row ${r.active ? "active" : ""}" style="margin-top:${r.mt}px;padding-left:${pad}px">
        <span class="tree-chev">${r.chev ? line(r.chev) : ""}</span>
        <span class="tree-icon">${line(r.icon)}</span>
        ${r.label}
      </div>
    `
  }

  renderItem(it: Item) {
    return html`
      <div class="item ${it.tint ?? ""}">
        <span class="item-icon ${it.cls ?? ""}">${it.icon}</span>
        <span class="item-label">${it.label}</span>
        ${it.tms ? html`<span class="item-tms">TMS Example</span>` : ""}
        ${it.ver ? html`<span class="item-ver">${it.ver}</span>` : ""}
      </div>
    `
  }

  renderLens(mark: string) {
    return html`<span class="lens">${fa("search")}
      ${mark === "plus" ? html`<b></b><b class="v"></b>` : mark === "minus" ? html`<b></b>` : html`<b class="dot"></b>`}
    </span>`
  }

  render() {
    return html`
      <div class="topbar">
        <div class="app-tab">${line("briefcase")}Project</div>
        <div class="top-buttons">
          ${TOP_BUTTONS.map(b => html`<div class="top-btn ${b.cls}" style="width:${b.w}px">${b.body()}</div>`)}
        </div>
      </div>

      <div class="actionbar">
        <div class="action">${line("doc")}New Project</div>
        <span class="sep"></span>
        <div class="action">${line("file")}New Query</div>
        <span class="sep"></span>
        <div class="action">${line("server")}New Connection</div>
        <span class="collapse">${line("chevUp2")}</span>
      </div>

      <div class="body">
        <div class="rail">
          <span class="copy">${line("copy")}</span>
          <hr />
          <span class="sliders">${line("sliders")}</span>
          <hr />
          <span class="exit">${line("exit")}<i class="arrow"></i></span>
        </div>

        <div class="tree">
          <div class="tree-search">${line("search")}</div>
          ${TREE.map(r => this.renderTreeRow(r))}
        </div>
        <div class="scroller"><div></div></div>

        <div class="main">
          <div class="doc-tabs">
            <div class="doc-tab">Log_ForceGraph ${line("close")}</div>
          </div>
          <div class="panel">
            <div class="panel-head">
              <div class="grid-btn">${gridIcon}</div>
              <div class="chip">${line("close")}<span>Typerefinery_Wir…</span></div>
              <div class="dev">DEV</div>
              <div class="bug-cell">${fa("bug")}</div>
            </div>

            <div class="toolbar">
              <div class="tool-group apply"><i></i>APPLY</div>
              <div class="tool-group" style="width:199px;padding-left:9px">
                <span class="tool">${fa("pause")}</span>
                <span class="tool">${fa("plus", "green")}</span>
                <span class="tool">${fa("clipboard")}</span>
                <span class="tool">${fa("bug")}</span>
              </div>
              <div class="tool-group" style="width:244px;padding-left:8px">
                <span class="tool">${fa("undo")}</span>
                <span class="tool">${fa("undo", "flip")}</span>
                <span class="tool">${this.renderLens("plus")}</span>
                <span class="tool">${this.renderLens("minus")}</span>
                <span class="tool">${this.renderLens("dot")}</span>
              </div>
              <div class="tool-group" style="width:63px;justify-content:center">
                <span class="tool">${fa("cog")}</span>
              </div>
              <div class="tool-group meta">
                <div class="meta-text">Print JSON (2)<br />ID: <code>i17g116vw</code></div>
                <div class="meta-tools">
                  <span class="tool">${fa("book", "olive")}</span>
                  <span class="tool">${fa("info", "blue")}</span>
                </div>
              </div>
              <div class="tool-group" style="width:110px;padding-left:10px;border-right:none">
                <span class="tool">${fa("link")}</span>
                <span class="tool">${fa("globe")}</span>
              </div>
            </div>

            <div class="work">
              <div class="palette">
                <div class="palette-search">${fa("search")}Search components</div>
                ${PALETTE.map(s => html`
                  <div class="section">
                    <div class="section-title">${s.title}</div>
                    ${s.items.map(i => this.renderItem(i))}
                    ${s.link ? html`<span class="dl">Download components</span>` : ""}
                  </div>
                `)}
                <div class="fade"></div>
              </div>
              <flow-canvas></flow-canvas>
            </div>

            <div class="status">
              ${STATUS.map(s => html`
                <div class="stat">
                  ${s.icon}<span>${s.key}</span>
                  ${s.strong ? html`<strong>${s.value}</strong>` : html`<em>${s.value}</em>`}
                </div>
              `)}
            </div>
          </div>
        </div>
      </div>
    `
  }
}
